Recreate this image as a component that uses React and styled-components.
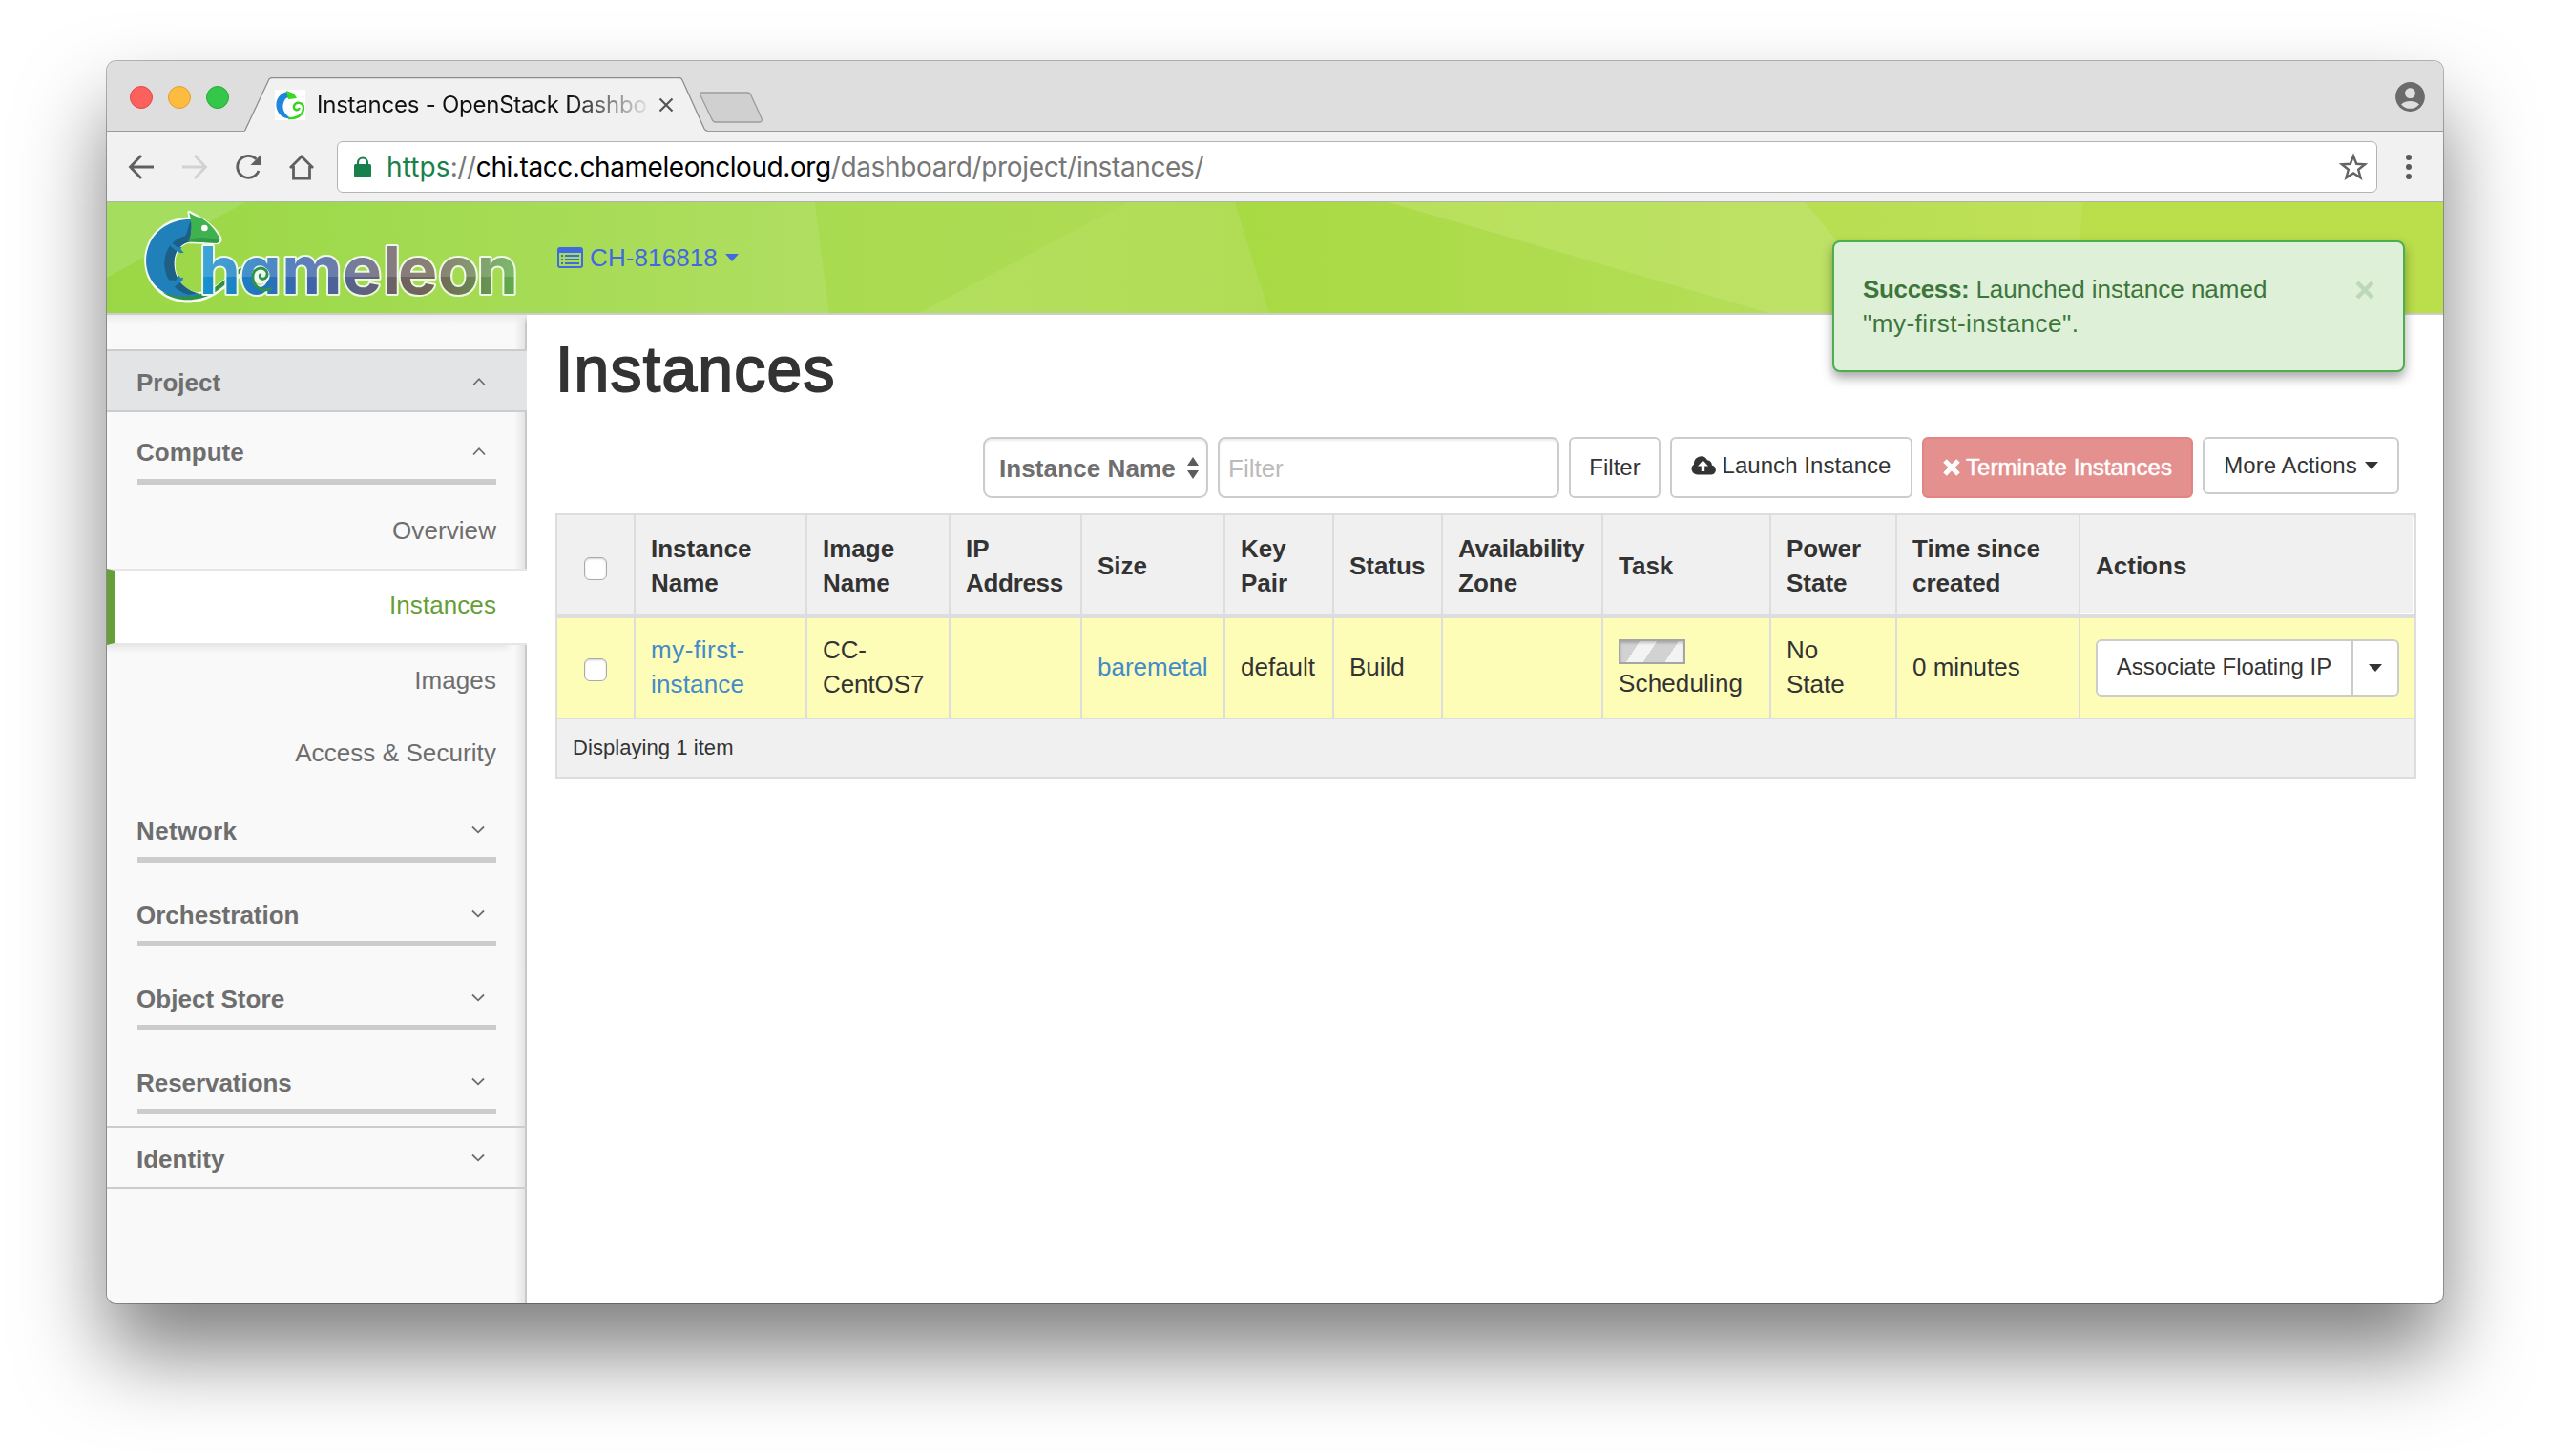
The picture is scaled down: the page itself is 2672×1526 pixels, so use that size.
import React from 'react';
import styled, { createGlobalStyle, css } from 'styled-components';
import { MdAccountCircle } from 'react-icons/md';

const sans = '"Liberation Sans", Arial, sans-serif';
const system = 'Inter, Roboto, sans-serif';

const Global = createGlobalStyle`
  * { box-sizing: border-box; }
  html, body { margin: 0; background: #fff; overflow: hidden; }
  body { font-family: ${sans}; font-size: 26px; line-height: 36px; color: #333; }
  svg { display: block; flex: none; }
`;

const Desktop = styled.div`
  width: 2672px;
  height: 1526px;
  padding: 64px 112px 160px;
  overflow: hidden;
`;

const Window = styled.div`
  width: 2448px;
  height: 1302px;
  border-radius: 10px;
  background: #fff;
  box-shadow: 0 0 0 1px rgba(0, 0, 0, 0.28), 0 52px 88px rgba(0, 0, 0, 0.5);
`;

const Clip = styled.div`
  display: flex;
  flex-direction: column;
  height: 100%;
  border-radius: 10px;
  overflow: hidden;
`;

/* ---------- browser chrome ---------- */

const TitleBar = styled.div`
  display: flex;
  align-items: flex-end;
  height: 74px;
  flex: none;
  background: #dedede;
  border-bottom: 1px solid #9a9a9a;
`;

const Lights = styled.div`
  display: flex;
  align-items: center;
  gap: 16px;
  height: 73px;
  padding: 3px 0 0 24px;
  width: 144px;
`;

const Light = styled.span`
  width: 24px;
  height: 24px;
  border-radius: 50%;
  background: ${(p) => p.$fill};
  border: 1px solid ${(p) => p.$edge};
`;

const Tab = styled.div`
  position: relative;
  display: flex;
  align-items: center;
  width: 485px;
  height: 57px;
  margin-bottom: -1px;
  padding-left: 32px;
`;

const TabShape = styled.svg`
  position: absolute;
  left: 0;
  top: 0;
`;

const TabIcon = styled.svg`
  position: relative;
  background: #fff;
`;

const TabTitle = styled.span`
  position: relative;
  width: 349px;
  margin-left: 12px;
  overflow: hidden;
  white-space: nowrap;
  font: 24px/32px ${system};
  letter-spacing: -0.24px;
  color: #111;
  mask-image: linear-gradient(90deg, #000 76%, transparent 101%);
`;

const TabClose = styled.svg`
  position: relative;
  margin-left: 9px;
`;

const NewTab = styled.svg`
  margin: 0 0 8px -9px;
`;

const Profile = styled.div`
  margin-left: auto;
  padding: 0 16px 17px 0;
  color: #6b6b6b;
`;

const Toolbar = styled.div`
  display: flex;
  align-items: center;
  flex: none;
  height: 74px;
  padding: 0 30px 0 22px;
  background: #f1f1f1;
  border-bottom: 1px solid #b0b0b0;
`;

const NavIcons = styled.div`
  display: flex;
  align-items: center;
  gap: 28px;
  width: 219px;
`;

const AddressBar = styled.div`
  display: flex;
  align-items: center;
  width: 2138px;
  height: 54px;
  padding: 0 9px 0 17px;
  background: #fff;
  border: 1px solid #b4b4b4;
  border-radius: 6px;
`;

const Url = styled.span`
  flex: 1;
  margin-left: 16px;
  font: 28px/40px ${system};
  letter-spacing: -0.35px;
  color: #777;
`;

const UrlScheme = styled.span`
  letter-spacing: 0.1px;
  color: #18804a;
`;

const UrlHost = styled.span`
  letter-spacing: -0.43px;
  color: #000;
`;

const MenuDots = styled.svg`margin-left: 29px;`;

/* ---------- dashboard header ---------- */

const Header = styled.header`
  position: relative;
  display: flex;
  flex: none;
  height: 118px;
  border-bottom: 2px solid #ccc;
  background: #a5da50;
`;

const Facets = styled.svg`
  position: absolute;
  left: 0;
  top: 0;
`;

const Logo = styled.svg`position: relative;`;

const ProjectPicker = styled.div`
  position: relative;
  display: flex;
  align-items: center;
  height: 36px;
  margin: 40px 0 0 22px;
  color: #4169e1;
`;

const PickerName = styled.span`
  margin: 0 8px 0 7px;
  letter-spacing: 0.1px;
`;

const Caret = styled.span`
  display: inline-block;
  border: 7px solid transparent;
  border-top: 8px solid currentColor;
  border-bottom: 0;
`;

const Toast = styled.div`
  position: absolute;
  z-index: 2;
  left: 1808px;
  top: 40px;
  display: flex;
  justify-content: space-between;
  width: 600px;
  height: 138px;
  padding: 31px 30px;
  background: #dff0d8;
  border: 2px solid #4cae4f;
  border-radius: 8px;
  box-shadow: 0 6px 12px rgba(0, 0, 0, 0.35);
  color: #3c763d;
`;

const ToastText = styled.div`
  display: flex;
  flex-direction: column;
`;

const ToastLine = styled.div`
  display: flex;
  gap: 7px;
  white-space: nowrap;
  letter-spacing: ${(p) => p.$track || 0}px;
`;

const ToastKind = styled.b`letter-spacing: -0.35px;`;

const CloseMark = styled.svg`margin-top: 9px;`;

/* ---------- sidebar ---------- */

const Body = styled.div`
  display: flex;
  flex: 1;
`;

const Sidebar = styled.nav`
  width: 440px;
  padding-top: 36px;
  background: linear-gradient(#ececec, rgba(249, 249, 249, 0) 10px),
    linear-gradient(270deg, #c8c8c8 2px, #e4e4e4 2px, #f9f9f9 13px);
  color: #6e6e6e;
`;

const Dashboard = styled.div`
  display: flex;
  align-items: center;
  justify-content: space-between;
  height: 66px;
  padding: 3px ${(p) => (p.$open ? 43 : 44)}px 0 31px;
  background: ${(p) => (p.$open ? '#e3e4e6' : 'transparent')};
  border-top: 2px solid #ccc;
  border-bottom: 2px solid #ccc;
  font-weight: bold;
`;

const Panel = styled.div`
  display: flex;
  align-items: flex-end;
  justify-content: space-between;
  height: ${(p) => (p.$open ? 76 : 88)}px;
  margin: 0 32px ${(p) => (p.$last ? 12 : 0)}px;
  padding: 0 ${(p) => (p.$open ? '11px 10px' : '12px 9px')} 0;
  border-bottom: 6px solid #ccc;
  font-weight: bold;
`;

const PanelName = styled.span`
  margin-left: -1px;
  letter-spacing: ${(p) => p.$track || 0}px;
`;

const ChevronBox = styled.span`
  display: flex;
  align-items: center;
  height: 36px;
  padding-bottom: 2px;
`;

const Entry = styled.a`
  display: block;
  height: ${(p) => p.$height}px;
  padding: ${(p) => p.$top}px 32px 0 0;
  text-align: right;
  letter-spacing: 0.08px;
  ${(p) =>
    p.$active &&
    css`
      background: #fff;
      color: #669e38;
      border: 2px solid #e6e6e6;
      border-right: 0;
      border-left: 8px solid #669e38;
      box-shadow: -14px 7px 8px -5px rgba(0, 0, 0, 0.1);
    `}
`;

/* ---------- main ---------- */

const Main = styled.main`
  flex: 1;
  padding: 17px 28px 0 30px;
`;

const Title = styled.h1`
  margin: 0 0 31px 0;
  height: 80px;
  font-size: 66px;
  line-height: 80px;
  font-weight: normal;
  letter-spacing: 1.25px;
  -webkit-text-stroke: 1.8px #333;
`;

const Filters = styled.div`
  display: flex;
  align-items: flex-start;
  justify-content: flex-end;
  height: 64px;
  margin-bottom: 16px;
  padding-right: 18px;
`;

const Select = styled.div`
  display: flex;
  align-items: center;
  justify-content: space-between;
  width: 236px;
  height: 64px;
  margin-right: 10px;
  padding: 1px 8px 0 15px;
  border: 2px solid #ccc;
  border-radius: 9px;
  box-shadow: inset 0 2px 2px rgba(0, 0, 0, 0.075);
  font-weight: bold;
  letter-spacing: 0.1px;
  color: #6e6e6e;
  white-space: nowrap;
`;

const FilterField = styled.div`
  width: 358px;
  height: 64px;
  margin-right: 10px;
  padding: 13px 10px 11px 9px;
  border: 2px solid #ccc;
  border-radius: 8px;
  box-shadow: inset 0 2px 2px rgba(0, 0, 0, 0.075);
  color: #bbb;
`;

const Button = styled.div`
  display: flex;
  align-items: center;
  justify-content: center;
  width: ${(p) => p.$width}px;
  height: ${(p) => p.$height || 64}px;
  margin-left: ${(p) => p.$gap || 0}px;
  padding-bottom: ${(p) => p.$lift || 0}px;
  background: ${(p) => (p.$danger ? '#e4908e' : '#fff')};
  border: 2px solid ${(p) => (p.$danger ? '#e38482' : '#ccc')};
  border-radius: 6px;
  color: ${(p) => (p.$danger ? '#fff' : '#333')};
  font-size: 24px;
  white-space: nowrap;
  ${(p) => p.$danger && css`-webkit-text-stroke: 0.5px #fff;`}
`;

const Label = styled.span`
  margin: 0 ${(p) => p.$after || 0}px 0 ${(p) => p.$before || 0}px;
  letter-spacing: 0.06px;
`;

const Table = styled.div`
  border: 2px solid #ddd;
`;

const Row = styled.div`
  display: grid;
  grid-template-columns: 82px 180px 150px 138px 150px 114px 114px 168px 176px 132px 192px 350px;
  height: ${(p) => (p.$head ? 108 : 106)}px;
  border-bottom: ${(p) => (p.$head ? 4 : 2)}px solid #ddd;
  background: ${(p) => (p.$head ? '#f0f0f0' : '#fefdb8')};
  font-weight: ${(p) => (p.$head ? 'bold' : 'normal')};
`;

const Cell = styled.div`
  display: flex;
  flex-direction: column;
  justify-content: center;
  padding: ${(p) => (p.$head ? '1px 0 0' : '0 0 3px')} 16px;
  border-right: 2px solid #ddd;
  color: ${(p) => (p.$link ? '#428bca' : 'inherit')};
  white-space: nowrap;
  &:last-child { border-right: 0; }
`;

const ActionsHead = styled(Cell)`
  border-radius: 0 8px 0 0;
  box-shadow: inset -2px -2px 0 #fff;
`;

const Checkbox = styled.span`
  width: 24px;
  height: 24px;
  margin: ${(p) => p.$top}px 0 0 12px;
  background: #fff;
  border: 1px solid #aaa;
  border-radius: 6px;
  box-shadow: inset 0 1px 2px rgba(0, 0, 0, 0.18);
`;

const Line = styled.span`
  display: block;
  letter-spacing: ${(p) => p.$track || 0}px;
`;

const Progress = styled.span`
  width: 70px;
  height: 26px;
  margin: 7px 0 2px;
  border: 2px solid #a5a5a5;
  background: repeating-linear-gradient(123deg, #d2d2d2 0 17px, #f3f3f3 17px 32px, #d2d2d2 32px 34px);
  box-shadow: inset 0 2px 3px rgba(0, 0, 0, 0.2);
`;

const SplitButton = styled.div`
  display: flex;
  width: 318px;
  height: 60px;
  margin-top: 3px;
  background: #fff;
  border: 2px solid #ccc;
  border-radius: 6px;
  font-size: 24px;
`;

const SplitMain = styled.span`
  display: flex;
  align-items: center;
  justify-content: center;
  width: 268px;
  padding: 0 1px 2px 0;
  border-right: 2px solid #ccc;
`;

const SplitToggle = styled.span`
  display: flex;
  align-items: center;
  justify-content: center;
  flex: 1;
`;

const Footer = styled.div`
  height: 60px;
  padding: 0 16px;
  background: #f0f0f0;
  font-size: 22px;
  line-height: 60px;
  letter-spacing: 0.06px;
`;

const Chevron = ({ up }) => (
  <ChevronBox>
    <svg width="14" height="10" viewBox="0 0 14 10" fill="none" stroke="#6e6e6e" strokeWidth="1.8">
      <path d={up ? 'M1 8.5 7 2.2 13 8.5' : 'M1 1.5 7 7.3 13 1.5'} />
    </svg>
  </ChevronBox>
);

const HeaderFacets = () => (
  <Facets width="2448" height="116" viewBox="0 0 2448 116">
    <defs>
      <linearGradient id="f1"><stop offset="0" stopColor="#9bd745" /><stop offset="0.35" stopColor="#a0da4e" /><stop offset="1" stopColor="#b0de61" /></linearGradient>
      <linearGradient id="f2"><stop offset="0" stopColor="#a9db50" /><stop offset="1" stopColor="#aedc54" /></linearGradient>
      <linearGradient id="f3"><stop offset="0" stopColor="#b3df5f" /><stop offset="1" stopColor="#b0dc55" /></linearGradient>
      <linearGradient id="f4"><stop offset="0" stopColor="#a8da43" /><stop offset="1" stopColor="#b4de57" /></linearGradient>
      <linearGradient id="f5"><stop offset="0" stopColor="#b9e05c" /><stop offset="1" stopColor="#bee267" /></linearGradient>
      <linearGradient id="f6"><stop offset="0" stopColor="#b8de52" /><stop offset="1" stopColor="#bfe158" /></linearGradient>
    </defs>
    <path d="M0 0H742L757 116H0Z" fill="url(#f1)" />
    <path d="M0 0H145L0 79Z" fill="#a5dd5e" />
    <path d="M742 0H1069L851 116H757Z" fill="url(#f2)" />
    <path d="M1069 0H1182L1218 116H851Z" fill="url(#f3)" />
    <path d="M1182 0H1343L1741 116H1218Z" fill="url(#f4)" />
    <path d="M1343 0H1780L1875 116H1741Z" fill="url(#f5)" />
    <path d="M1780 0H2071L2060 116H1875Z" fill="url(#f6)" />
    <path d="M2071 0H2448V116H2060Z" fill="#bbde4b" />
  </Facets>
);

const ChameleonLogo = () => (
  <Logo width="450" height="116" viewBox="6 36 1350 348">
    <defs>
      <linearGradient id="word" gradientUnits="userSpaceOnUse" x1="310" x2="1293" y1="0" y2="0">
        <stop offset="0" stopColor="#1593d0" />
        <stop offset="0.18" stopColor="#2274bd" />
        <stop offset="0.34" stopColor="#3f64ab" />
        <stop offset="0.5" stopColor="#5d6183" />
        <stop offset="0.62" stopColor="#6f6062" />
        <stop offset="0.75" stopColor="#716856" />
        <stop offset="0.86" stopColor="#6b8454" />
        <stop offset="1" stopColor="#5fae4b" />
      </linearGradient>
      <filter id="gloss" filterUnits="userSpaceOnUse" x="280" y="140" width="1060" height="220" colorInterpolationFilters="sRGB">
        <feFlood x="280" y="140" width="1060" height="130" floodColor="#fff" floodOpacity="0.17" result="shine" />
        <feComposite in="shine" in2="SourceGraphic" operator="atop" />
      </filter>
    </defs>
    <g stroke="#f4faee" strokeWidth="11" strokeLinejoin="round" fill="#f4faee">
      <path d="M268 88C190 86 130 145 129 218C129 295 190 347 268 347C340 344 380 290 432 262L425 244C380 280 340 322 290 324C240 318 212 270 216 220C218 185 240 165 262 160L355 163Q366 158 360 145C345 118 320 95 265 68Z" />
    </g>
    <path d="M275 90C190 86 130 145 129 218C129 290 185 337 262 342L300 324C240 318 212 270 216 220C218 185 240 165 268 160Z" fill="#1f80ba" />
    <path d="M275 92C262 96 264 120 252 142C215 150 186 185 187 230C188 275 215 312 262 326L296 322C245 312 215 270 218 222C220 185 242 165 268 160Z" fill="#1d5f85" />
    <path d="M205 160 228 178 242 176 238 184 248 194 238 196 220 186 206 174Z M196 280 222 282 232 266 238 274 246 272 244 282 226 296 210 308 196 300Z" fill="#1f80ba" />
    <path d="M265 68 Q278 80 300 84C325 98 350 125 361 150Q362 162 350 164L262 160C276 130 272 100 265 68Z" fill="#3fb24f" />
    <path d="M265 152 Q310 140 360 155Q360 163 350 164L262 160Z" fill="#2f9a49" />
    <circle cx="313" cy="117" r="10" fill="#fff" />
    <path d="M180 318C230 340 300 335 345 303C380 280 400 255 432 240L436 252C400 270 380 300 335 325C290 350 220 350 180 318Z" fill="#2e8f49" />
    <text
      x="296 423 556 746 874 921 1047 1169"
      y="323"
      fontFamily="Inter, Lato, sans-serif"
      fontSize="208"
      fontWeight="700"
      fill="url(#word)"
      stroke="#eef7e2"
      strokeWidth="12"
      strokeLinejoin="round"
      filter="url(#gloss)"
      style={{ paintOrder: 'stroke', fontFeatureSettings: '"cv11"' }}
    >
      hameleon
    </text>
    <circle cx="490" cy="266" r="28" fill="#eef8ee" />
    <path d="M520 308C480 325 452 280 470 252C490 232 518 250 508 270C500 282 482 276 488 264" fill="none" stroke="#2e9150" strokeWidth="9" strokeLinecap="round" />
  </Logo>
);

const panels = [
  { name: 'Network', track: 0.4 },
  { name: 'Orchestration', track: 0 },
  { name: 'Object Store', track: 0.05 },
  { name: 'Reservations', track: -0.05 },
];

const columns = [
  ['Instance', 'Name'],
  ['Image', 'Name'],
  ['IP', 'Address'],
  ['Size'],
  ['Key', 'Pair'],
  ['Status'],
  ['Availability', 'Zone'],
  ['Task'],
  ['Power', 'State'],
  ['Time since', 'created'],
];

const tightWords = { Address: -0.3, Availability: -0.35 };

const Lines = ({ items, track }) =>
  items.map((text) => <Line key={text} $track={tightWords[text] || track}>{text}</Line>);

export default function App() {
  return (
    <Desktop>
      <Global />
      <Window>
        <Clip>
          <TitleBar>
            <Lights>
              <Light $fill="#fc615d" $edge="#df4744" />
              <Light $fill="#fdbc40" $edge="#de9f34" />
              <Light $fill="#34c84a" $edge="#27aa35" />
            </Lights>
            <Tab>
              <TabShape width="485" height="57" viewBox="0 0 485 57">
                <path d="M0 57V56Q1 56 2 53L25 4Q26 .5 29 .5H456Q458 .5 459 3L482 54Q483 56 485 56V57Z" fill="#f1f1f1" />
                <path d="M0 56Q1 56 2 53L25 4Q26 .5 29 .5H456Q458 .5 459 3L482 54Q483 56 485 56" fill="none" stroke="#8e8e8e" strokeWidth="1.3" />
              </TabShape>
              <TabIcon width="32" height="32" viewBox="0 0 32 32">
                <path d="M13 2C3 4 0 13 2 20C4 27 10 31 17 30C10 26 7 20 9 14C10 10 12 8 15 8Z" fill="#1e86dc" />
                <path d="M12 1 20 4 23 9 14 10Z" fill="#35dc1c" />
                <path d="M14 30C22 31 30 27 30 19C30 13 22 12 20 17C19 21 24 23 26 19" fill="none" stroke="#35d51c" strokeWidth="2.4" />
              </TabIcon>
              <TabTitle>Instances - OpenStack Dashbo</TabTitle>
              <TabClose width="16" height="16" viewBox="0 0 16 16" stroke="#555" strokeWidth="2.2">
                <path d="M1.5 1.5 14.5 14.5M14.5 1.5 1.5 14.5" />
              </TabClose>
            </Tab>
            <NewTab width="68" height="33" viewBox="0 0 68 33">
              <path d="M4 1H51Q54 1 55 4L66 28Q67 32 64 32H18Q15 32 14 29L2 4Q1 1 4 1Z" fill="#d0d0d0" stroke="#9c9c9c" strokeWidth="1.3" />
            </NewTab>
            <Profile>
              <MdAccountCircle size={37} />
            </Profile>
          </TitleBar>

          <Toolbar>
            <NavIcons>
              <svg width="28" height="28" viewBox="0 0 28 28" fill="none" stroke="#5f5f5f" strokeWidth="2.8">
                <path d="M27 14H3M14 2 2.5 14 14 26" />
              </svg>
              <svg width="28" height="28" viewBox="0 0 28 28" fill="none" stroke="#d2d2d2" strokeWidth="2.8">
                <path d="M1 14H25M14 2 25.500 14 14 26" />
              </svg>
              <svg width="28" height="28" viewBox="0 0 28 28" fill="none" stroke="#5f5f5f" strokeWidth="2.8">
                <path d="M25 18A11.500 11.500 0 1 1 22.500 5.800" />
                <path d="M27.500 1V12H16.500Z" fill="#5f5f5f" stroke="none" />
              </svg>
              <svg width="28" height="28" viewBox="0 0 28 28" fill="none" stroke="#5f5f5f" strokeWidth="2.8">
                <path d="M2 15 14 3 26 15M5.500 13V26H22.500V13" />
              </svg>
            </NavIcons>
            <AddressBar>
              <svg width="18" height="22" viewBox="0 0 18 22">
                <rect x="0" y="8" width="18" height="13.500" rx="1.500" fill="#18804a" />
                <path d="M4 9V6.500A5 5 0 0 1 14 6.500V9" fill="none" stroke="#18804a" strokeWidth="2.200" />
              </svg>
              <Url>
                <UrlScheme>https</UrlScheme>://<UrlHost>chi.tacc.chameleoncloud.org</UrlHost>/dashboard/project/instances/
              </Url>
              <svg width="30" height="30" viewBox="0 0 30 30" fill="none" stroke="#636363" strokeWidth="2.4">
                <path d="M15 3.500 18.200 11.800 27 12.300 20.200 17.800 22.500 26.300 15 21.500 7.500 26.300 9.800 17.800 3 12.300 11.800 11.800Z" />
              </svg>
            </AddressBar>
            <MenuDots width="8" height="28" viewBox="0 0 8 28" fill="#5a5a5a">
              <circle cx="4" cy="4" r="3" />
              <circle cx="4" cy="14" r="3" />
              <circle cx="4" cy="24" r="3" />
            </MenuDots>
          </Toolbar>

          <Header>
            <HeaderFacets />
            <ChameleonLogo />
            <ProjectPicker>
              <svg width="27" height="22" viewBox="0 0 27 22">
                <rect x="1" y="1" width="25" height="20" rx="2" fill="none" stroke="currentColor" strokeWidth="2" />
                <path d="M1 1H26V6H1Z" fill="currentColor" />
                <path d="M4 9H6M8 9H23M4 13H6M8 13H23M4 17H6M8 17H23" stroke="currentColor" strokeWidth="1.800" />
              </svg>
              <PickerName>CH-816818</PickerName>
              <Caret />
            </ProjectPicker>
            <Toast>
              <ToastText>
                <ToastLine>
                  <ToastKind>Success:</ToastKind>
                  <span>Launched instance named</span>
                </ToastLine>
                <ToastLine $track={0.5}>"my-first-instance".</ToastLine>
              </ToastText>
              <CloseMark width="20" height="20" viewBox="0 0 20 20" stroke="#bdd7b9" strokeWidth="4.500">
                <path d="M2 2 18 18M18 2 2 18" />
              </CloseMark>
            </Toast>
          </Header>

          <Body>
            <Sidebar>
              <Dashboard $open>Project<Chevron up /></Dashboard>
              <Panel $open><PanelName>Compute</PanelName><Chevron up /></Panel>
              <Entry $height={88} $top={30}>Overview</Entry>
              <Entry $height={80} $top={18} $active>Instances</Entry>
              <Entry $height={76} $top={19}>Images</Entry>
              <Entry $height={64} $top={19}>Access &amp; Security</Entry>
              {panels.map((p, i) => (
                <Panel key={p.name} $last={i === panels.length - 1}>
                  <PanelName $track={p.track}>{p.name}</PanelName>
                  <Chevron />
                </Panel>
              ))}
              <Dashboard>Identity<Chevron /></Dashboard>
            </Sidebar>

            <Main>
              <Title>Instances</Title>
              <Filters>
                <Select>
                  Instance Name
                  <svg width="12" height="24" viewBox="0 0 12 24" fill="#5c5c5c">
                    <path d="M6 0 12 9H0ZM6 23 12 14H0Z" />
                  </svg>
                </Select>
                <FilterField>Filter</FilterField>
                <Button $width={96} $lift={1}>Filter</Button>
                <Button $width={254} $gap={10} $lift={5}>
                  <svg width="26" height="20" viewBox="0 0 26 20">
                    <path d="M6.500 19.500A6 6 0 0 1 3 8.700A7.500 7.500 0 0 1 17 4.300A4.800 4.800 0 0 1 21.800 9.600A5 5 0 0 1 20.500 19.500Z" fill="#333" />
                    <path d="M12.500 4.500 18 10.500H14.200V16H10.800V10.500H7Z" fill="#fff" />
                  </svg>
                  <Label $before={6}>Launch Instance</Label>
                </Button>
                <Button $width={284} $gap={10} $lift={1} $danger>
                  <svg width="18" height="18" viewBox="0 0 18 18" stroke="#fff" strokeWidth="5">
                    <path d="M2 2 16 16M16 2 2 16" />
                  </svg>
                  <Label $before={6}>Terminate Instances</Label>
                </Button>
                <Button $width={206} $height={60} $gap={10} $lift={1}>
                  <Label $after={8}>More Actions</Label>
                  <Caret />
                </Button>
              </Filters>

              <Table>
                <Row $head>
                  <Cell $head><Checkbox $top={7} /></Cell>
                  {columns.map((c) => (
                    <Cell $head key={c.join(' ')}><Lines items={c} /></Cell>
                  ))}
                  <ActionsHead $head>Actions</ActionsHead>
                </Row>
                <Row>
                  <Cell><Checkbox $top={7} /></Cell>
                  <Cell $link>
                    <Line $track={0.55}>my-first-</Line>
                    <Line $track={0.15}>instance</Line>
                  </Cell>
                  <Cell><Lines items={['CC-', 'CentOS7']} track={-0.1} /></Cell>
                  <Cell />
                  <Cell $link>baremetal</Cell>
                  <Cell>default</Cell>
                  <Cell>Build</Cell>
                  <Cell />
                  <Cell><Progress /><Line $track={0.15}>Scheduling</Line></Cell>
                  <Cell><Lines items={['No', 'State']} /></Cell>
                  <Cell>0 minutes</Cell>
                  <Cell>
                    <SplitButton>
                      <SplitMain>Associate Floating IP</SplitMain>
                      <SplitToggle><Caret /></SplitToggle>
                    </SplitButton>
                  </Cell>
                </Row>
                <Footer>Displaying 1 item</Footer>
              </Table>
            </Main>
          </Body>
        </Clip>
      </Window>
    </Desktop>
  );
}
